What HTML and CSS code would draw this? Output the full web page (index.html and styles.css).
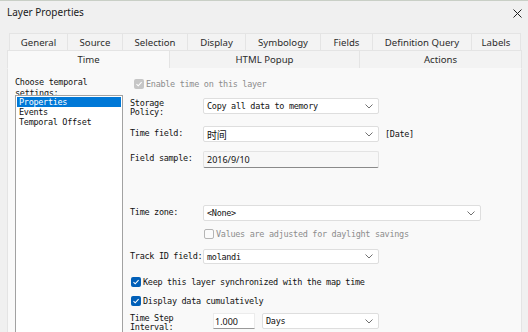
FILE: index.html
```html
<!DOCTYPE html>
<html lang="en">
<head>
    <meta charset="UTF-8">
    <meta name="viewport" content="width=device-width, initial-scale=1.0">
    <title>Layer Properties</title>
    <link rel="stylesheet" href="styles.css">
</head>
<body>
    <div class="window">
        <div class="titlebar">
            <span class="title">Layer Properties</span>
            <svg class="close-icon" width="9" height="9" viewBox="0 0 9 9">
                <path d="M0.5 0.5 L8.5 8.5 M8.5 0.5 L0.5 8.5" stroke="#1f1f1f" stroke-width="1" fill="none"></path>
            </svg>
        </div>

        <div class="tab-row tab-row-top">
            <div class="tab">General</div>
            <div class="tab">Source</div>
            <div class="tab">Selection</div>
            <div class="tab">Display</div>
            <div class="tab">Symbology</div>
            <div class="tab">Fields</div>
            <div class="tab">Definition Query</div>
            <div class="tab">Labels</div>
        </div>
        <div class="tab-row tab-row-bottom">
            <div class="tab tab-active">Time</div>
            <div class="tab">HTML Popup</div>
            <div class="tab">Actions</div>
        </div>

        <div class="panel">
            <div class="side">
                <div class="side-label">Choose temporal<br>settings:</div>
                <div class="listbox">
                    <div class="list-item selected">Properties</div>
                    <div class="list-item">Events</div>
                    <div class="list-item">Temporal Offset</div>
                </div>
            </div>

            <div class="form">
                <div class="check-row row-enable disabled">
                    <span class="checkbox checkbox-grey">
                        <svg width="8" height="8" viewBox="0 0 8 8"><path d="M1.5 4.2 L3.2 5.8 L6.6 2.2" stroke="#fff" stroke-width="1.1" fill="none"></path></svg>
                    </span>
                    Enable time on this layer
                </div>

                <div class="field-row row-storage">
                    <div class="field-label">Storage<br>Policy:</div>
                    <div class="combo combo-mid">
                        <span>Copy all data to memory</span>
                        <svg class="chevron" width="8" height="5" viewBox="0 0 8 5"><path d="M0.5 0.5 L4 4 L7.5 0.5" stroke="#707070" stroke-width="1" fill="none"></path></svg>
                    </div>
                </div>

                <div class="field-row row-time">
                    <div class="field-label label-single">Time field:</div>
                    <div class="combo combo-mid">
                        <span class="cjk">时间</span>
                        <svg class="chevron" width="8" height="5" viewBox="0 0 8 5"><path d="M0.5 0.5 L4 4 L7.5 0.5" stroke="#707070" stroke-width="1" fill="none"></path></svg>
                    </div>
                    <span class="field-type">[Date]</span>
                </div>

                <div class="field-row row-sample">
                    <div class="field-label label-single">Field sample:</div>
                    <div class="textbox textbox-readonly">2016/9/10</div>
                </div>

                <div class="field-row row-zone">
                    <div class="field-label label-single">Time zone:</div>
                    <div class="combo combo-long">
                        <span>&lt;None&gt;</span>
                        <svg class="chevron" width="8" height="5" viewBox="0 0 8 5"><path d="M0.5 0.5 L4 4 L7.5 0.5" stroke="#707070" stroke-width="1" fill="none"></path></svg>
                    </div>
                </div>

                <div class="check-row row-daylight disabled">
                    <span class="checkbox checkbox-empty"></span>
                    Values are adjusted for daylight savings
                </div>

                <div class="field-row row-track">
                    <div class="field-label label-single">Track ID field:</div>
                    <div class="combo combo-mid combo-short">
                        <span>molandi</span>
                        <svg class="chevron" width="8" height="5" viewBox="0 0 8 5"><path d="M0.5 0.5 L4 4 L7.5 0.5" stroke="#707070" stroke-width="1" fill="none"></path></svg>
                    </div>
                </div>

                <div class="check-row row-keep">
                    <span class="checkbox checkbox-blue">
                        <svg width="8" height="8" viewBox="0 0 8 8"><path d="M1.5 4.2 L3.2 5.8 L6.6 2.2" stroke="#fff" stroke-width="1.1" fill="none"></path></svg>
                    </span>
                    Keep this layer synchronized with the map time
                </div>

                <div class="check-row row-cumulative">
                    <span class="checkbox checkbox-blue">
                        <svg width="8" height="8" viewBox="0 0 8 8"><path d="M1.5 4.2 L3.2 5.8 L6.6 2.2" stroke="#fff" stroke-width="1.1" fill="none"></path></svg>
                    </span>
                    Display data cumulatively
                </div>

                <div class="field-row row-step">
                    <div class="field-label">Time Step<br>Interval:</div>
                    <div class="textbox textbox-number">1.000</div>
                    <div class="combo combo-units">
                        <span>Days</span>
                        <svg class="chevron" width="8" height="5" viewBox="0 0 8 5"><path d="M0.5 0.5 L4 4 L7.5 0.5" stroke="#707070" stroke-width="1" fill="none"></path></svg>
                    </div>
                </div>
            </div>
        </div>
    </div>
</body>
</html>
```

FILE: styles.css
```css
body {
    margin: 0;
    padding: 0;
    background-color: #f0f0f0;
}

.window {
    width: 528px;
    height: 332px;
    overflow: hidden;
    box-sizing: border-box;
    border-top: 1px solid #c9cfc6;
    background-color: #f0f0f0;
    font-family: "Noto Sans", "Liberation Sans", sans-serif;
    color: #1a1a1a;
}

.titlebar {
    height: 32px;
    display: flex;
    justify-content: space-between;
    padding: 5px 6px 0 7px;
    box-sizing: border-box;
}

.title {
    font-size: 10px;
    line-height: 12px;
}

.close-icon {
    margin-top: 3px;
}

/* tabs */
.tab-row {
    display: grid;
    font-size: 9.6px;
}

.tab-row-top {
    margin-left: 9px;
    grid-template-columns: 58px 55px 65px 58px 75px 52px 99px 50px;
    height: 17px;
}

.tab-row-bottom {
    margin-left: 7px;
    grid-template-columns: 162px 190px 163px;
    height: 18px;
}

.tab {
    display: flex;
    align-items: center;
    justify-content: center;
    background-color: #f3f3f3;
    border: 1px solid #e4e4e4;
    border-right: none;
    border-bottom: none;
    color: #2b2b2b;
}

.tab:last-child {
    border-right: 1px solid #e4e4e4;
}

.tab-active {
    background-color: #f9f9f9;
}

/* page content */
.panel {
    margin-left: 7px;
    width: 515px;
    height: 270px;
    box-sizing: border-box;
    background-color: #f9f9f9;
    border: 1px solid #e4e4e4;
    border-top-color: #f9f9f9;
    display: flex;
    font-family: "DejaVu Sans Mono", "Liberation Mono", monospace;
    font-size: 8.5px;
    letter-spacing: -0.3px;
    color: #111;
}

.side {
    width: 108px;
    margin-left: 7px;
    padding-top: 8px;
    display: flex;
    flex-direction: column;
}

.side-label {
    height: 18px;
    line-height: 11px;
    overflow: hidden;
}

.listbox {
    flex: 1;
    background-color: #fff;
    border: 1px solid #a2a2a2;
    padding: 1px;
}

.list-item {
    height: 10px;
    line-height: 10px;
    padding-left: 2px;
}

.list-item.selected {
    background-color: #0078d7;
    color: #fff;
}

.form {
    margin-left: 7px;
    padding-top: 10px;
    display: flex;
    flex-direction: column;
}

.field-row {
    display: flex;
    align-items: flex-start;
    height: 16px;
}

.field-label {
    width: 73px;
    line-height: 9px;
    padding-top: 1px;
}

.label-single {
    padding-top: 3px;
}

.check-row {
    display: flex;
    align-items: center;
    height: 10px;
    line-height: 10px;
    gap: 2px;
}

.disabled {
    color: #8c8c8c;
}

.checkbox {
    width: 10px;
    height: 10px;
    box-sizing: border-box;
    border-radius: 2px;
    display: flex;
    align-items: center;
    justify-content: center;
}

.checkbox-blue {
    background-color: #005fb8;
}

.checkbox-grey {
    background-color: #c6c6c6;
}

.checkbox-empty {
    border: 1px solid #b5b5b5;
    background-color: #fbfbfb;
}

.row-enable { margin-left: 4px; margin-top: 0; }
.row-storage { margin-top: 9px; }
.row-time { margin-top: 12px; }
.row-sample { margin-top: 9px; height: 17px; }
.row-zone { margin-top: 37px; }
.row-daylight { margin-left: 74px; margin-top: 8px; }
.row-track { margin-top: 10px; height: 15px; }
.row-keep { margin-left: 1px; margin-top: 13px; }
.row-cumulative { margin-left: 1px; margin-top: 9px; }
.row-step { margin-top: 7px; }

.combo {
    height: 16px;
    box-sizing: border-box;
    background-color: #fff;
    border: 1px solid #dedede;
    border-radius: 2px;
    display: flex;
    align-items: center;
    justify-content: space-between;
    padding: 0 5px 0 3px;
}

.combo-mid {
    width: 176px;
}

.combo-short {
    height: 15px;
}

.combo-long {
    width: 278px;
}

.combo-units {
    width: 117px;
    margin-left: 7px;
}

.cjk {
    font-family: "Noto Sans CJK SC", sans-serif;
    font-size: 10px;
}

.field-type {
    margin-left: 6px;
    padding-top: 3px;
}

.textbox {
    height: 17px;
    box-sizing: border-box;
    display: flex;
    align-items: center;
    font-family: "Noto Sans", "Noto Sans CJK SC", sans-serif;
    font-size: 9px;
    letter-spacing: 0;
}

.textbox-readonly {
    width: 176px;
    padding-left: 3px;
    background-color: #f7f7f7;
    border: 1px solid #e3e3e3;
    border-bottom-color: #8a8a8a;
    border-radius: 2px;
}

.textbox-number {
    width: 42px;
    height: 16px;
    margin-left: 10px;
    padding-left: 1px;
    background-color: #fff;
    border: 1px solid #ececec;
    border-bottom-color: #9a9a9a;
}
```
